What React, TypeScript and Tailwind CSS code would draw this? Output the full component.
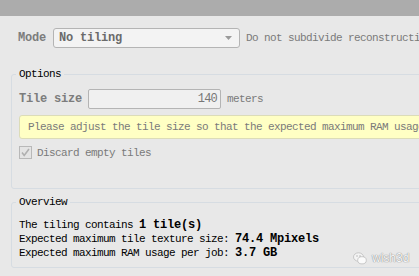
import React from 'react';

const mono = "font-['Liberation_Mono','DejaVu_Sans_Mono',monospace]";
const bold = 'font-bold text-[12px] tracking-[-0.2px]';

function Group({ title, className, children }: { title: string; className?: string; children: React.ReactNode }) {
  return (
    <fieldset className={`ml-[11px] w-[440px] border border-[#d6dce2] rounded-[3px] px-[7px] ${className ?? ''}`}>
      <legend className="ml-[-3px] px-[3px] leading-[14px] text-black">{title}</legend>
      {children}
    </fieldset>
  );
}

export default function App() {
  return (
    <div className={`relative w-[419px] h-[276px] overflow-hidden bg-[#e8e8e8] ${mono} text-[11px] tracking-[-0.6px] leading-[14px]`}>
      <div className="h-4 bg-[#acacac]" />

      {/* mode row */}
      <div className="mt-3 flex h-5 items-center pl-[18px]">
        <span className={`w-[35px] shrink-0 ${bold} text-[#7c7c7c]`}>Mode</span>
        <div className="flex h-5 w-[187px] shrink-0 items-center rounded-[3px] border border-[#b4b4b4] bg-[#f3f3f3] pl-[5px] pr-[7px]">
          <span className={`flex-1 ${bold} text-[#6a6a6a]`}>No tiling</span>
          <svg width="7" height="4" viewBox="0 0 7 4">
            <path d="M0 0h7L3.5 4z" fill="#9a9a9a" />
          </svg>
        </div>
        <span className="ml-[6px] whitespace-nowrap text-[#7a7a7a]">Do not subdivide reconstruction</span>
      </div>

      <Group title="Options" className="mt-[19px] pb-[29px]">
        <div className="mt-2 flex h-5 items-center">
          <span className={`w-[69px] shrink-0 ${bold} text-[#7c7c7c]`}>Tile size</span>
          <div className="flex h-5 w-[133px] shrink-0 items-center justify-end rounded-[2px] border border-[#b4b4b4] bg-[#f0f0f0] pr-[3px] text-[12px] tracking-[-0.8px] text-[#777]">
            140
          </div>
          <span className="ml-[6px] text-[#7a7a7a]">meters</span>
        </div>
        <div className="mt-[6px] flex h-6 items-center whitespace-nowrap rounded-[3px] border border-[#dcdcb8] bg-[#ffffc4] pl-[8px] text-[#7a7a7a]">
          Please adjust the tile size so that the expected maximum RAM usage per job
        </div>
        <div className="mt-[7px] flex h-[13px] items-center">
          <div className="flex h-[13px] w-[13px] items-center justify-center border border-[#b8b8b8] bg-[#e4e4e4]">
            <svg width="9" height="9" viewBox="0 0 9 9">
              <path d="M1 4.5l2.2 3L8 1" stroke="#b0b0b0" strokeWidth="1.6" fill="none" />
            </svg>
          </div>
          <span className="ml-[5px] text-[#7a7a7a]">Discard empty tiles</span>
        </div>
      </Group>

      <Group title="Overview" className="mt-[6px] pb-[7px]">
        <div className="mt-[9px] whitespace-nowrap text-black">
          <div>The tiling contains <span className={bold}>1 tile(s)</span></div>
          <div>Expected maximum tile texture size: <span className={bold}>74.4 Mpixels</span></div>
          <div>Expected maximum RAM usage per job: <span className={bold}>3.7 GB</span></div>
        </div>
      </Group>

      {/* watermark */}
      <div className="absolute left-[353px] top-[251px] flex items-center gap-[5px] font-['Liberation_Sans',sans-serif] tracking-normal">
        <svg width="14" height="13" viewBox="0 0 14 13">
          <ellipse cx="5.5" cy="5" rx="5" ry="4.2" fill="#f4f4f4" stroke="#bdbdbd" strokeWidth="0.8" />
          <ellipse cx="9" cy="8.3" rx="4.3" ry="3.6" fill="#fbfbfb" stroke="#bdbdbd" strokeWidth="0.8" />
          <circle cx="4" cy="4" r="0.7" fill="#aaa" />
          <circle cx="7" cy="4" r="0.7" fill="#aaa" />
        </svg>
        <span className="text-[12px] text-[#f7f7f7] [text-shadow:0_0_1px_#8a8a8a,0_0_1px_#8a8a8a]">wish3d</span>
      </div>
    </div>
  );
}
